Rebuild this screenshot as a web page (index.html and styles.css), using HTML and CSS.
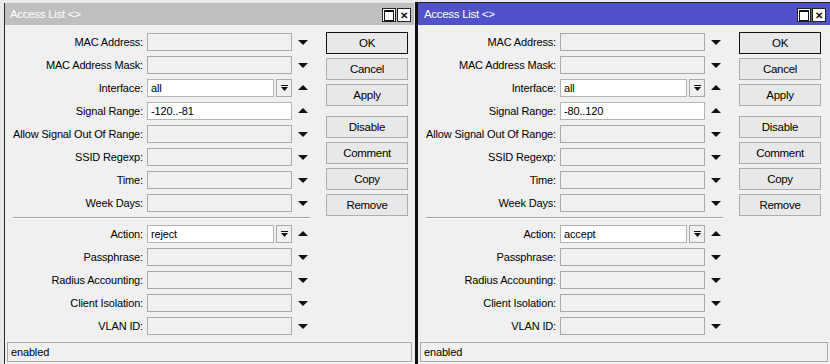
FILE: index.html
```html
<!DOCTYPE html>
<html lang="en">
<head>
    <meta charset="UTF-8">
    <title>Access List</title>
    <link rel="stylesheet" href="styles.css">
</head>
<body>
<div class="desk">

    <!-- inactive window -->
    <div class="win win-left">
        <div class="titlebar">
            <span class="title">Access List &lt;&gt;</span>
            <span class="tbtn max"></span>
            <span class="tbtn close">&#x2715;</span>
        </div>
        <div class="win-body">
            <div class="form">
                <div class="row"><label>MAC Address:</label><span class="field"></span><span class="arrow down"></span></div>
                <div class="row"><label>MAC Address Mask:</label><span class="field"></span><span class="arrow down"></span></div>
                <div class="row"><label>Interface:</label><span class="field white short">all</span><span class="drop"><svg width="7" height="6" viewBox="0 0 7 6"><rect x="0" y="0" width="7" height="1" fill="#111"/><path d="M0 2h7l-3.5 4z" fill="#111"/></svg></span><span class="arrow up"></span></div>
                <div class="row"><label>Signal Range:</label><span class="field white">-120..-81</span><span class="arrow up"></span></div>
                <div class="row"><label>Allow Signal Out Of Range:</label><span class="field"></span><span class="arrow down"></span></div>
                <div class="row"><label>SSID Regexp:</label><span class="field"></span><span class="arrow down"></span></div>
                <div class="row"><label>Time:</label><span class="field"></span><span class="arrow down"></span></div>
                <div class="row"><label>Week Days:</label><span class="field"></span><span class="arrow down"></span></div>
                <div class="sep"></div>
                <div class="row"><label>Action:</label><span class="field white short">reject</span><span class="drop"><svg width="7" height="6" viewBox="0 0 7 6"><rect x="0" y="0" width="7" height="1" fill="#111"/><path d="M0 2h7l-3.5 4z" fill="#111"/></svg></span><span class="arrow up"></span></div>
                <div class="row"><label>Passphrase:</label><span class="field"></span><span class="arrow down"></span></div>
                <div class="row"><label>Radius Accounting:</label><span class="field"></span><span class="arrow down"></span></div>
                <div class="row"><label>Client Isolation:</label><span class="field"></span><span class="arrow down"></span></div>
                <div class="row"><label>VLAN ID:</label><span class="field"></span><span class="arrow down"></span></div>
            </div>
            <div class="buttons">
                <button class="btn default">OK</button>
                <button class="btn">Cancel</button>
                <button class="btn">Apply</button>
                <button class="btn gap">Disable</button>
                <button class="btn">Comment</button>
                <button class="btn">Copy</button>
                <button class="btn">Remove</button>
            </div>
        </div>
        <div class="status">enabled</div>
    </div>

    <!-- active window -->
    <div class="win win-right">
        <div class="titlebar active">
            <span class="title">Access List &lt;&gt;</span>
            <span class="tbtn max"></span>
            <span class="tbtn close">&#x2715;</span>
        </div>
        <div class="win-body">
            <div class="form">
                <div class="row"><label>MAC Address:</label><span class="field"></span><span class="arrow down"></span></div>
                <div class="row"><label>MAC Address Mask:</label><span class="field"></span><span class="arrow down"></span></div>
                <div class="row"><label>Interface:</label><span class="field white short">all</span><span class="drop"><svg width="7" height="6" viewBox="0 0 7 6"><rect x="0" y="0" width="7" height="1" fill="#111"/><path d="M0 2h7l-3.5 4z" fill="#111"/></svg></span><span class="arrow up"></span></div>
                <div class="row"><label>Signal Range:</label><span class="field white">-80..120</span><span class="arrow up"></span></div>
                <div class="row"><label>Allow Signal Out Of Range:</label><span class="field"></span><span class="arrow down"></span></div>
                <div class="row"><label>SSID Regexp:</label><span class="field"></span><span class="arrow down"></span></div>
                <div class="row"><label>Time:</label><span class="field"></span><span class="arrow down"></span></div>
                <div class="row"><label>Week Days:</label><span class="field"></span><span class="arrow down"></span></div>
                <div class="sep"></div>
                <div class="row"><label>Action:</label><span class="field white short">accept</span><span class="drop"><svg width="7" height="6" viewBox="0 0 7 6"><rect x="0" y="0" width="7" height="1" fill="#111"/><path d="M0 2h7l-3.5 4z" fill="#111"/></svg></span><span class="arrow up"></span></div>
                <div class="row"><label>Passphrase:</label><span class="field"></span><span class="arrow down"></span></div>
                <div class="row"><label>Radius Accounting:</label><span class="field"></span><span class="arrow down"></span></div>
                <div class="row"><label>Client Isolation:</label><span class="field"></span><span class="arrow down"></span></div>
                <div class="row"><label>VLAN ID:</label><span class="field"></span><span class="arrow down"></span></div>
            </div>
            <div class="buttons">
                <button class="btn default">OK</button>
                <button class="btn">Cancel</button>
                <button class="btn">Apply</button>
                <button class="btn gap">Disable</button>
                <button class="btn">Comment</button>
                <button class="btn">Copy</button>
                <button class="btn">Remove</button>
            </div>
        </div>
        <div class="status">enabled</div>
    </div>

</div>
</body>
</html>
```

FILE: styles.css
```css
* {
    box-sizing: border-box;
}

body {
    margin: 0;
    font-family: "Liberation Sans", Arial, sans-serif;
    font-size: 11px;
    letter-spacing: -0.15px;
    color: #000;
    background: #e9e9e9;
}

.desk {
    display: flex;
    height: 364px;
    padding-top: 2px;
    overflow: hidden;
}

/* Fenster */
.win {
    display: flex;
    flex-direction: column;
    background: #f0f0f0;
}

.win-left {
    width: 410px;
    margin-left: 4px;
    margin-top: 1px;
    border-left: 1px solid #2a2a2a;
}

.win-right {
    flex: 1;
    margin-left: 1px;
    border-left: 3px solid #111;
    border-top: 1px solid #222;
}

.titlebar {
    display: flex;
    align-items: center;
    height: 22px;
    padding: 0 3px 0 5px;
    background: #bfbfbf;
    color: #fff;
    font-size: 11.5px;
    letter-spacing: -0.3px;
}

.titlebar.active {
    background: #5151c9;
    padding-right: 4px;
    padding-left: 6px;
}

.title {
    flex: 1;
}

.tbtn {
    width: 14px;
    height: 14px;
    margin-top: 2px;
    margin-left: 1px;
    border: 1px solid #222;
    background: #fff;
    color: #111;
    display: flex;
    align-items: center;
    justify-content: center;
    font-size: 10px;
    font-weight: bold;
    letter-spacing: 0;
}

.tbtn.max::after {
    content: "";
    width: 8px;
    height: 8px;
    border: 1px solid #111;
    border-top-width: 2px;
}

.win-body {
    display: flex;
}

.form {
    width: 321px;
    padding-top: 8px;
}

.row {
    display: flex;
    align-items: center;
    height: 18px;
    margin-bottom: 5px;
}

.row label {
    width: 138px;
    margin-right: 4px;
    text-align: right;
    white-space: nowrap;
}

.field {
    width: 145px;
    height: 18px;
    border: 1px solid #a9a9a9;
    background: #f0f0f0;
    padding: 1px 3px 0;
    line-height: 15px;
}

.field.white {
    background: #fff;
    border-color: #b4b4b4;
}

.field.short {
    width: 127px;
}

.drop {
    width: 16px;
    height: 18px;
    margin-left: 2px;
    border: 1px solid #a9a9a9;
    background: #f0f0f0;
    display: flex;
    align-items: center;
    justify-content: center;
}

.arrow {
    width: 0;
    height: 0;
    margin-left: 6px;
    border-left: 5px solid transparent;
    border-right: 5px solid transparent;
}

.arrow.down {
    border-top: 5px solid #111;
    margin-top: 1px;
}

.arrow.up {
    border-bottom: 5px solid #111;
    margin-top: -1px;
}

.sep {
    width: 297px;
    margin-left: 8px;
    border-top: 1px solid #a0a0a0;
    border-bottom: 1px solid #fff;
    margin-bottom: 6px;
}

.buttons {
    display: flex;
    flex-direction: column;
    padding-top: 7px;
}

.btn {
    width: 82px;
    height: 22px;
    margin-bottom: 4px;
    border: 1px solid #adadad;
    background: #e8e8e8;
    font-family: inherit;
    font-size: 11.5px;
    letter-spacing: -0.3px;
    color: #000;
    padding: 0;
}

.btn.default {
    border-color: #111;
}

.btn.gap {
    margin-top: 6px;
}

.status {
    margin: 2px 2px 0;
    height: 20px;
    border: 1px solid #a9a9a9;
    padding: 0 3px;
    line-height: 18px;
}
```
